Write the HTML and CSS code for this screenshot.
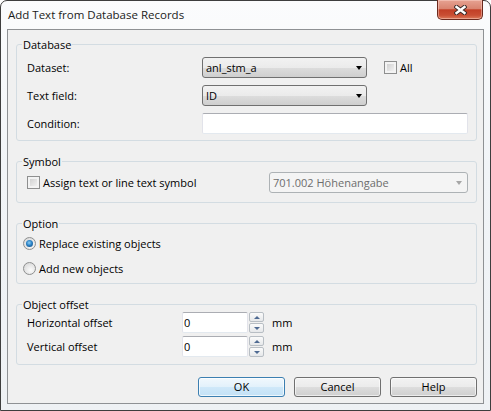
FILE: index.html
```html
<!DOCTYPE html>
<html lang="en">
<head>
    <meta charset="UTF-8">
    <title>Add Text from Database Records</title>
    <link rel="stylesheet" href="styles.css">
</head>
<body>
    <div class="window">
        <div class="titlebar">
            <span class="title">Add Text from Database Records</span>
            <button class="close" title="Close">
                <svg width="13" height="10" viewBox="0 0 13 10">
                    <path d="M2.5 2 L10.5 8 M10.5 2 L2.5 8" stroke="#3a2a28" stroke-width="4.4" stroke-linecap="square"/>
                    <path d="M2.5 2 L10.5 8 M10.5 2 L2.5 8" stroke="#ffffff" stroke-width="2.4" stroke-linecap="square"/>
                </svg>
            </button>
        </div>

        <div class="client">
            <fieldset class="group">
                <legend>Database</legend>
                <div class="db-grid">
                    <label>Dataset:</label>
                    <div class="row">
                        <div class="combo"><span class="combo-text">anl_stm_a</span><span class="arrow"></span></div>
                        <label class="check all"><span class="box"></span>All</label>
                    </div>
                    <label>Text field:</label>
                    <div class="row">
                        <div class="combo"><span class="combo-text">ID</span><span class="arrow"></span></div>
                    </div>
                    <label>Condition:</label>
                    <div class="row">
                        <div class="textbox condition"></div>
                    </div>
                </div>
            </fieldset>

            <fieldset class="group">
                <legend>Symbol</legend>
                <div class="symbol-row">
                    <label class="check"><span class="box"></span>Assign text or line text symbol</label>
                    <div class="combo disabled"><span class="combo-text">701.002 Höhenangabe</span><span class="arrow"></span></div>
                </div>
            </fieldset>

            <fieldset class="group">
                <legend>Option</legend>
                <div class="option-list">
                    <label class="radio"><span class="dot checked"></span>Replace existing objects</label>
                    <label class="radio"><span class="dot"></span>Add new objects</label>
                </div>
            </fieldset>

            <fieldset class="group">
                <legend>Object offset</legend>
                <div class="offset-grid">
                    <label>Horizontal offset</label>
                    <div class="row">
                        <div class="textbox num">0</div>
                        <div class="spin"><span class="up"></span><span class="down"></span></div>
                        <span class="unit">mm</span>
                    </div>
                    <label>Vertical offset</label>
                    <div class="row">
                        <div class="textbox num">0</div>
                        <div class="spin"><span class="up"></span><span class="down"></span></div>
                        <span class="unit">mm</span>
                    </div>
                </div>
            </fieldset>

            <div class="buttons">
                <button class="btn default">OK</button>
                <button class="btn">Cancel</button>
                <button class="btn">Help</button>
            </div>
        </div>
    </div>
</body>
</html>
```

FILE: styles.css
```css
body {
    margin: 0;
    background: #ffffff;
    font-family: "Open Sans", "Noto Sans", sans-serif;
    font-size: 11px;
    color: #000;
}

/* window frame */
.window {
    width: 491px;
    height: 411px;
    box-sizing: border-box;
    display: flex;
    flex-direction: column;
    padding: 0 6px 6px 6px;
    border: 1px solid #3e3e3e;
    border-radius: 7px 7px 0 0;
    background: linear-gradient(#fbfcfd, #f1f4f7 40%, #eef1f4);
}
.titlebar {
    height: 28px;
    display: flex;
    align-items: center;
    padding-left: 1px;
}
.title {
    font-size: 11.5px;
    color: #1b1b1b;
    padding-bottom: 1px;
}
.close {
    margin-left: auto;
    margin-right: 1px;
    align-self: flex-start;
    margin-top: -1px;
    width: 46px;
    height: 20px;
    padding: 0;
    display: flex;
    align-items: center;
    justify-content: center;
    border: 1px solid #6b2a1e;
    border-top: none;
    border-radius: 0 0 5px 5px;
    background: linear-gradient(#e6a292, #d98470 45%, #c23f26 52%, #c94e33 80%, #dc7a5a);
    box-shadow: inset 0 0 0 1px rgba(255, 220, 210, 0.45);
}

.client {
    flex: 1;
    border: 1px solid #8e9194;
    background: #f0f0f0;
    padding: 0 6px 0 8px;
}

/* group boxes */
.group {
    margin: 13px 0 0 0;
    padding: 0;
    min-width: 0;
    border: 1px solid #d3dce2;
    border-radius: 3px;
}
.group:first-child {
    margin-top: 7px;
}
.group legend {
    margin-left: 5px;
    padding: 0 1px;
    line-height: 15px;
}

label {
    display: flex;
    align-items: center;
}
.row {
    display: flex;
    align-items: center;
}

.db-grid {
    display: grid;
    grid-template-columns: 175px 1fr;
    grid-template-rows: 21px 21px 21px;
    row-gap: 7px;
    padding: 5px 8px 6px 10px;
}

/* dropdowns */
.combo {
    width: 165px;
    height: 21px;
    box-sizing: border-box;
    display: flex;
    align-items: center;
    padding: 0 4px 0 3px;
    border: 1px solid #707070;
    border-radius: 3px;
    background: linear-gradient(#f2f2f2, #ebebeb 50%, #dddddd 51%, #cfcfcf);
}
.combo-text {
    flex: 1;
    padding-bottom: 1px;
}
.arrow {
    width: 0;
    height: 0;
    border-left: 3.5px solid transparent;
    border-right: 3.5px solid transparent;
    border-top: 4px solid #000;
}
.combo.disabled {
    width: 199px;
    border-color: #adb2b5;
    background: #f4f4f4;
    color: #6d6d6d;
    padding-right: 5px;
}
.combo.disabled .arrow {
    border-top-color: #a6a6a6;
}

/* text boxes */
.textbox {
    height: 21px;
    box-sizing: border-box;
    border: 1px solid #e2e3ea;
    border-top-color: #abadb3;
    border-bottom-color: #e3e9ef;
    border-radius: 2px;
    background: #fff;
}
.condition {
    width: 266px;
}

/* checkboxes and radios */
.check .box {
    width: 13px;
    height: 13px;
    box-sizing: border-box;
    margin-right: 3px;
    border: 1px solid #8e8f8f;
    background: linear-gradient(135deg, #c9c9c9, #f9f9f9);
    box-shadow: inset 0 0 0 2px #f3f3f3;
}
.check.all {
    margin-left: 17px;
}

.symbol-row {
    display: flex;
    align-items: center;
    justify-content: space-between;
    height: 21px;
    padding: 3px 8px 9px 10px;
}

.option-list {
    display: flex;
    flex-direction: column;
    gap: 8px;
    padding: 4px 0 6px 6px;
}
.radio {
    height: 17px;
}
.dot {
    width: 13px;
    height: 13px;
    box-sizing: border-box;
    margin-right: 3px;
    border: 1px solid #8e8f8f;
    border-radius: 50%;
    background: radial-gradient(circle at 60% 65%, #fbfbfb, #d2d2d2);
    display: flex;
    align-items: center;
    justify-content: center;
}
.dot.checked::after {
    content: "";
    width: 7px;
    height: 7px;
    border-radius: 50%;
    background: radial-gradient(circle at 45% 40%, #8fd0f5 0, #2b83c7 45%, #0d3f70 100%);
}

/* offset fields */
.offset-grid {
    display: grid;
    grid-template-columns: 155px 1fr;
    grid-template-rows: 21px 21px;
    row-gap: 3px;
    padding: 0 8px 7px 10px;
}
.textbox.num {
    width: 66px;
    padding-left: 1px;
    display: flex;
    align-items: center;
}
.spin {
    width: 15px;
    height: 21px;
    margin-left: 1px;
    display: flex;
    flex-direction: column;
    gap: 1px;
}
.spin span {
    flex: 1;
    box-sizing: border-box;
    border: 1px solid #b8bec4;
    border-radius: 2px;
    background: linear-gradient(#fbfbfb, #e6e8ea);
    display: flex;
    align-items: center;
    justify-content: center;
}
.spin .up::after {
    content: "";
    border-left: 3px solid transparent;
    border-right: 3px solid transparent;
    border-bottom: 3px solid #4f6a92;
}
.spin .down::after {
    content: "";
    border-left: 3px solid transparent;
    border-right: 3px solid transparent;
    border-top: 3px solid #4f6a92;
}
.unit {
    margin-left: 8px;
}

/* dialog buttons */
.buttons {
    display: flex;
    justify-content: flex-end;
    gap: 9px;
    margin-top: 12px;
}
.btn {
    width: 87px;
    height: 20px;
    padding: 0 0 1px 0;
    font-family: inherit;
    font-size: 11px;
    color: #000;
    border: 1px solid #707070;
    border-radius: 3px;
    background: linear-gradient(#f2f2f2, #ebebeb 50%, #dddddd 51%, #cfcfcf);
    box-shadow: inset 0 0 0 1px rgba(255, 255, 255, 0.6);
}
.btn.default {
    border-color: #3c7fb1;
    background: linear-gradient(#f1f8fd, #e2f1fb 50%, #cfe8f9 51%, #c3e1f6);
    box-shadow: inset 0 0 0 1px rgba(255, 255, 255, 0.7);
}
```
